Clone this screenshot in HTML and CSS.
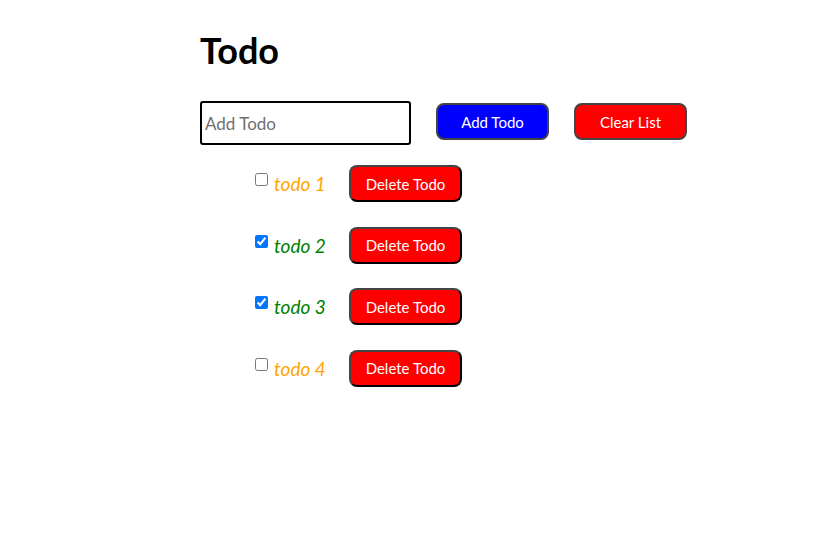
FILE: index.html
```html
<!DOCTYPE html>
<html>
<head>
<meta charset="utf-8">
<link rel="stylesheet" href="styles.css">
</head>
<body>
<div class="app">
  <h1 class="title">Todo</h1>
  <div class="form-row">
    <input class="todo-input" type="text" placeholder="Add Todo">
    <button class="btn btn-add">Add Todo</button>
    <button class="btn btn-clear">Clear List</button>
  </div>
  <ul class="todo-list">
    <li class="todo-item"><input type="checkbox" class="check"><span class="label pending">todo 1</span><button class="btn btn-delete">Delete Todo</button></li>
    <li class="todo-item"><input type="checkbox" class="check" checked><span class="label done">todo 2</span><button class="btn btn-delete">Delete Todo</button></li>
    <li class="todo-item"><input type="checkbox" class="check" checked><span class="label done">todo 3</span><button class="btn btn-delete">Delete Todo</button></li>
    <li class="todo-item"><input type="checkbox" class="check"><span class="label pending">todo 4</span><button class="btn btn-delete">Delete Todo</button></li>
  </ul>
</div>
</body>
</html>
```
FILE: styles.css
```css
html, body {
  margin: 0;
  padding: 0;
  background: #fff;
}
body {
  font-family: Lato, "Open Sans", sans-serif;
  color: #000;
}
.app {
  padding: 26px 0 0 200px;
}
.title {
  margin: 0;
  font-size: 36px;
  font-weight: 700;
  line-height: 48px;
}
.form-row {
  display: flex;
  align-items: center;
  margin-top: 27px;
}
.todo-input {
  box-sizing: border-box;
  width: 211px;
  height: 44px;
  border: 2px solid #000;
  border-radius: 3px;
  padding: 0 3px;
  font-family: inherit;
  font-size: 17px;
  color: #000;
  outline: none;
}
.todo-input::placeholder {
  color: #6f6f6f;
}
.btn {
  box-sizing: border-box;
  width: 113px;
  height: 37px;
  border: 2px solid #444;
  border-radius: 8px;
  color: #fff;
  font-family: inherit;
  font-size: 15px;
  padding: 0;
  cursor: pointer;
}
.btn-add {
  background: #0000ff;
  margin-left: 25px;
  margin-top: -3px;
}
.btn-clear {
  background: #ff0000;
  margin-left: 25px;
  margin-top: -3px;
}
.btn-delete {
  background: #ff0000;
  border-bottom-color: #000;
  border-right-color: #000;
}
.todo-list {
  list-style: none;
  margin: 20px 0 0 0;
  padding: 0 0 0 55px;
}
.todo-item {
  display: flex;
  align-items: center;
  height: 37px;
  margin-bottom: 24.5px;
}
.check {
  width: 13px;
  height: 13px;
  margin: -8px 6px 0 0;
}
.label {
  font-style: italic;
  font-size: 19px;
  width: 75px;
}
.pending {
  color: #ffa500;
}
.done {
  color: #008000;
}
```
